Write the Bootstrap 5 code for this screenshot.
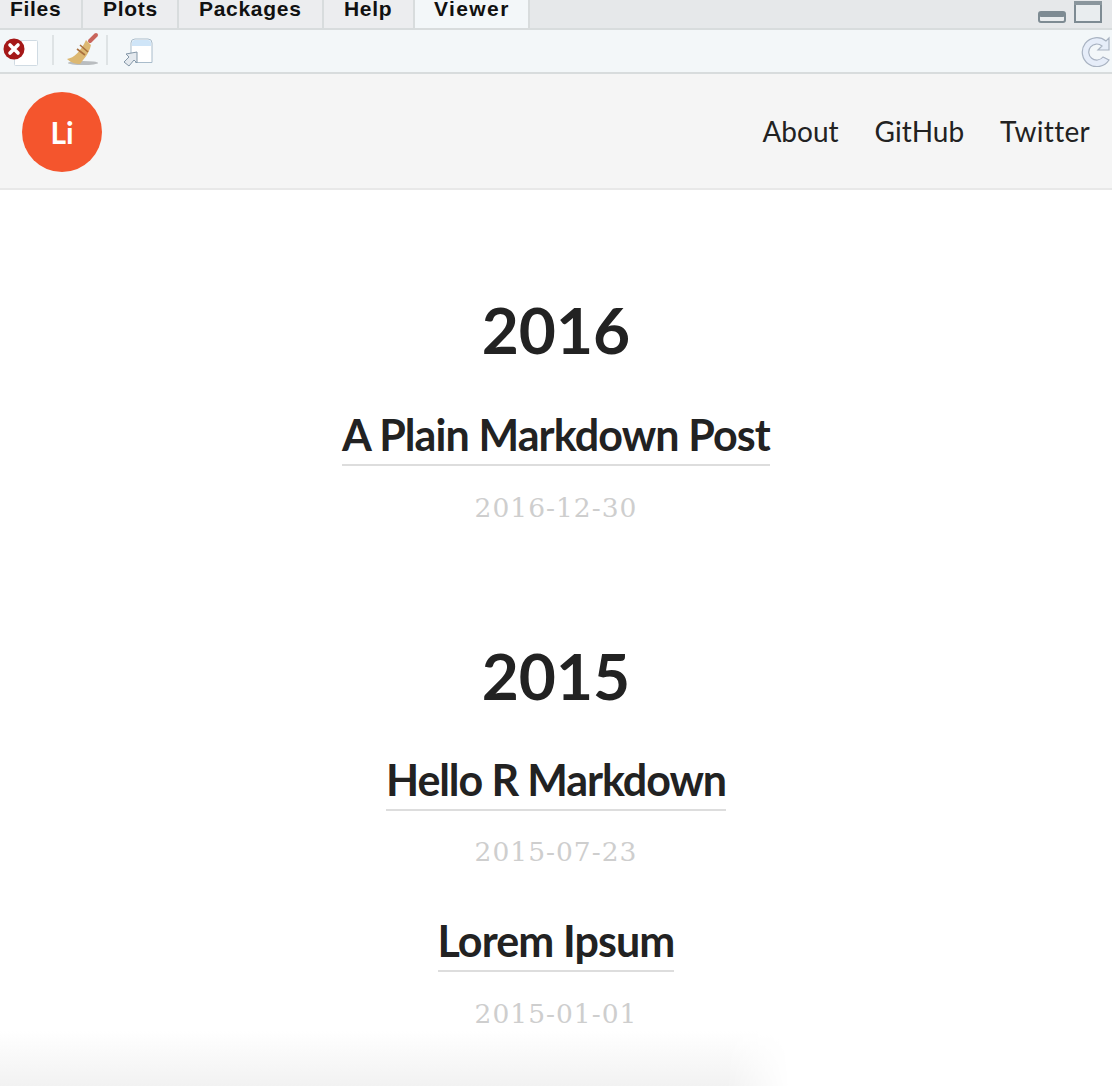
<!DOCTYPE html>
<html lang="en"><head><meta charset="utf-8"><title>Viewer</title>
<link href="https://cdn.jsdelivr.net/npm/bootstrap@5.3.0/dist/css/bootstrap.min.css" rel="stylesheet">
<style>
html,body{height:1086px;overflow:hidden;background:#fff}
body{position:relative;font-family:Lato,sans-serif;color:#222}
.tabbar{height:30px;background:#e6e8ea;border-bottom:2px solid #d8dcdd;align-items:flex-start;overflow:hidden}
.tabx{flex:none;font:bold 21px/1 "Liberation Sans",sans-serif;color:#111;border-right:2px solid #d8dcdd;background:#ecedef;letter-spacing:.7px;margin-top:-4px;padding-top:2px;height:32px}
.tabx.first{padding-left:10px;width:83px}
.tabx.t2{width:96px;padding-left:20px}
.tabx.t3{width:145px;padding-left:20px}
.tabx.t4{width:91px;padding-left:20px}
.tabx.on{background:#f3f7f9;height:36px;width:115px;padding-left:19px;letter-spacing:1.4px}
.winbtns{margin-left:auto;gap:8px;padding-right:10px;align-items:flex-end;height:28px;padding-bottom:5px}
.toolbar{height:44px;background:#f3f7f9;border-bottom:2px solid #d8dcdd}
.topnav{height:116px;background:#f5f5f5;border-bottom:2px solid #e8e8e8;padding:2px 22px 0}
.logo{width:80px;height:80px;border-radius:50%;background:#f4552d;color:#fff;font-size:30px;font-weight:700}
.navl{gap:36px;font-size:28px;color:#222;font-variant-ligatures:none;margin-top:-2px}
.navl a{color:#222;text-decoration:none}
.navl a:last-child{letter-spacing:.3px}
.yr{font-size:64px;font-weight:700;line-height:1;color:#222;margin:0}
.ptitle{display:inline-block;font-size:43px;font-weight:700;line-height:1;letter-spacing:-.9px;color:#222;border-bottom:2px solid #ddd;padding-bottom:8px;margin:0}
.ptitle.tight{letter-spacing:-1.1px}
.pdate{font:26.500px/1 "DejaVu Serif",serif;color:#cecece;letter-spacing:1px}
.y16{margin-top:108px}.y15{margin-top:122px}
.pt1{margin-top:51px}.pt1b{margin-top:50px}.pd{margin-top:29px}.pdb{margin-top:28px}.pt2{margin-top:54px}
.bfade{position:absolute;left:0;bottom:0;width:790px;height:55px;background:linear-gradient(to top,#f2f2f2,#fff);-webkit-mask-image:linear-gradient(to right,#000 92%,transparent);mask-image:linear-gradient(to right,#000 92%,transparent)}
</style></head><body>
<div class="tabbar d-flex">
 <div class="tabx first">Files</div><div class="tabx t2">Plots</div><div class="tabx t3">Packages</div><div class="tabx t4">Help</div><div class="tabx on">Viewer</div>
 <div class="winbtns d-flex">
  <svg width="28" height="12" viewBox="0 0 28 12"><rect x="1" y="1" width="26" height="10" rx="2" fill="#e9ecee" stroke="#7e8b93" stroke-width="2"/><rect x="1" y="1" width="26" height="5" rx="2" fill="#7e8b93"/></svg>
  <svg width="28" height="22" viewBox="0 0 28 22"><rect x="1" y="0" width="26" height="21" fill="#e9edef" stroke="#7e8b93" stroke-width="2"/><rect x="0" y="0" width="28" height="4" fill="#8a969d"/></svg>
 </div>
</div>
<div class="toolbar d-flex align-items-center">
 <svg width="170" height="42" viewBox="0 0 170 42" class="flex-shrink-0">
  <rect x="14.500" y="10.500" width="23" height="25" rx="1" fill="#fff" stroke="#d0dbe3"/>
  <circle cx="14" cy="19" r="10.500" fill="#a51818"/>
  <path d="M10 15l8 8M18 15l-8 8" stroke="#fff" stroke-width="3.600" stroke-linecap="round"/>
  <rect x="52.500" y="5" width="1" height="30" fill="#c9cfd2"/>
  <rect x="106.500" y="5" width="1" height="30" fill="#c9cfd2"/>
  <ellipse cx="83" cy="33" rx="15" ry="2" fill="#b9bdc0"/>
  <path d="M90 11l6-6" stroke="#c9655c" stroke-width="4" stroke-linecap="round"/>
  <path d="M86 10l5 5c-2 9-8 15-11 19-4 0-9-1-13-5 7-1 14-8 19-19z" fill="#dcb872"/>
  <path d="M80 15l8 7M77 19l8 6" stroke="#a9703d" stroke-width="1.600"/>
  <path d="M131 27v-14a4 4 0 0 1 4-4h13a4 4 0 0 1 4 4v19.500h-17" fill="#fff" stroke="#a9bccb"/>
  <path d="M132 16v-3a3 3 0 0 1 3-3h13a3 3 0 0 1 3 3v3z" fill="#cfe5f8"/>
  <path d="M124 32l5-5-3-3 11-2v11l-3-3-5 6z" fill="#e4e9ee" stroke="#8497a8"/>
 </svg>
 <svg class="ms-auto" width="32" height="32" viewBox="0 0 32 32">
  <path d="M29 3v12h-11l4-4a8 8 0 1 0 1 11l6 3a14.500 14.500 0 1 1-3-19z" fill="#e6edf9" stroke="#a9b3c2" stroke-width="1.200"/>
 </svg>
</div>
<nav class="topnav d-flex align-items-center justify-content-between">
 <div class="logo d-flex align-items-center justify-content-center">Li</div>
 <div class="navl d-flex"><a href="#">About</a><a href="#">GitHub</a><a href="#">Twitter</a></div>
</nav>
<main class="text-center">
 <h2 class="yr y16">2016</h2>
 <div class="pt1"><h3 class="ptitle">A Plain Markdown Post</h3></div>
 <div class="pdate pd">2016-12-30</div>
 <h2 class="yr y15">2015</h2>
 <div class="pt1b"><h3 class="ptitle tight">Hello R Markdown</h3></div>
 <div class="pdate pdb">2015-07-23</div>
 <div class="pt2"><h3 class="ptitle">Lorem Ipsum</h3></div>
 <div class="pdate pd">2015-01-01</div>
</main>
<div class="bfade"></div>
</body></html>
